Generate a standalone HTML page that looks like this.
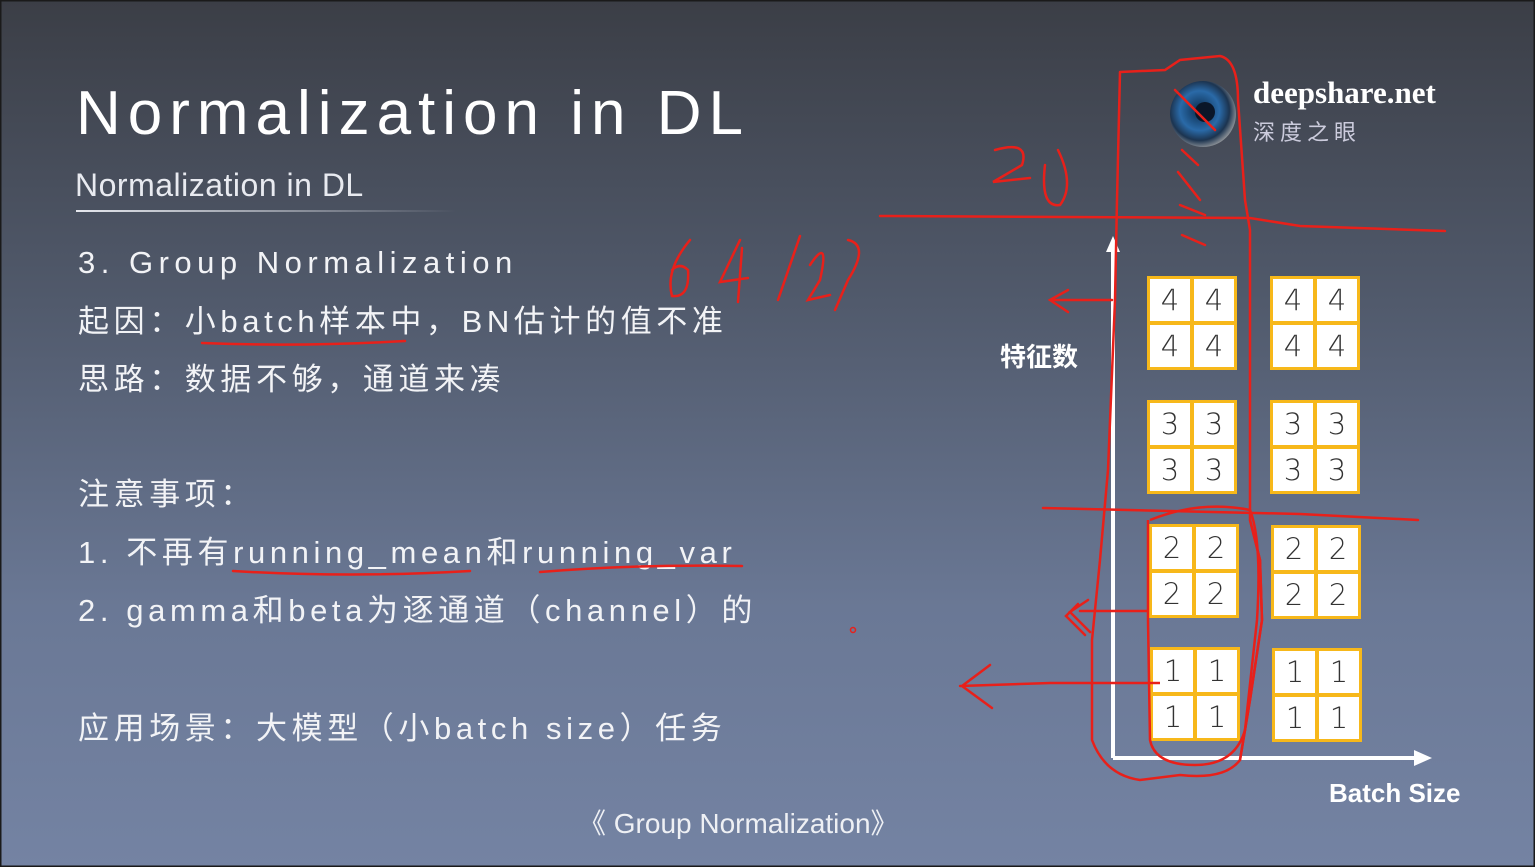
<!DOCTYPE html>
<html><head><meta charset="utf-8"><style>
html,body{margin:0;padding:0;width:1535px;height:867px;overflow:hidden}
body{background:linear-gradient(180deg,#3b3e46 0%,#515a6c 35%,#6a7895 70%,#7483a3 100%);font-family:"Liberation Sans","Noto Sans CJK SC",sans-serif}
svg{position:absolute;left:0;top:0}
.blk{position:absolute;width:90px;height:94px;background:#f7b81a;display:grid;grid-template-columns:1fr 1fr;gap:4px;padding:3px;box-sizing:border-box}
.blk div{background:#fff;display:flex;align-items:center;justify-content:center;font-size:29px;color:#333;font-family:"DejaVu Sans","Liberation Sans",sans-serif;font-weight:300}
</style></head><body>
<svg width="1535" height="867" viewBox="0 0 1535 867" xmlns="http://www.w3.org/2000/svg">
<defs><linearGradient id="ul" x1="0" x2="1"><stop offset="0" stop-color="#e6e8ee"/><stop offset="1" stop-color="#e6e8ee" stop-opacity="0"/></linearGradient>
<radialGradient id="eye" cx="0.45" cy="0.45" r="0.6"><stop offset="0" stop-color="#0b2a4a"/><stop offset="0.5" stop-color="#2a6aa8"/><stop offset="0.75" stop-color="#1c3450"/><stop offset="1" stop-color="#aaa"/></radialGradient></defs>
<rect x="0" y="0" width="1535" height="867" fill="none" stroke="#1a1a1a" stroke-width="3"/>
<g fill="#fff" font-family="Liberation Sans, Noto Sans CJK SC, sans-serif">
<text x="76" y="134" font-size="62" letter-spacing="7">Normalization in DL</text>
<text x="75" y="196" font-size="32" fill="#e8eaf0" letter-spacing="0.5">Normalization in DL</text>
<rect x="76" y="210" width="380" height="2" fill="url(#ul)"/>
<g font-size="31" letter-spacing="4.6" fill="#f2f3f6">
<text x="78" y="273" letter-spacing="5.5">3. Group Normalization</text>
<text x="78" y="332">起因：小batch样本中，BN估计的值不准</text>
<text x="78" y="390">思路：数据不够，通道来凑</text>
<text x="78" y="505">注意事项：</text>
<text x="78" y="563">1. 不再有running_mean和running_var</text>
<text x="78" y="621">2. gamma和beta为逐通道（channel）的</text>
<text x="78" y="739">应用场景：大模型（小batch size）任务</text>
</g>
<text x="578" y="833" font-size="28" fill="#eef0f4">《 Group Normalization》</text>
<text x="1000" y="366" font-size="26" font-weight="bold">特征数</text>
<text x="1329" y="802" font-size="26" font-weight="bold">Batch Size</text>
<text x="1253" y="103" font-size="31" font-weight="bold" font-family="Liberation Serif, serif">deepshare.net</text>
<text x="1253" y="140" font-size="22" fill="#ccd" letter-spacing="5">深度之眼</text>
</g>
<circle cx="1203" cy="114" r="33" fill="url(#eye)"/>
<circle cx="1205" cy="112" r="10" fill="#0a1628"/>
<g stroke="#fff" stroke-width="4" fill="#fff">
<line x1="1113" y1="758" x2="1113" y2="248"/>
<line x1="1113" y1="758" x2="1418" y2="758"/>
</g>
<polygon points="1106,252 1113,236 1120,252" fill="#fff"/>
<polygon points="1414,750 1432,758 1414,766" fill="#fff"/>
<g fill="none" stroke="#e8201a" stroke-width="2.5" stroke-linecap="round">
<path d="M880 216 L1250 218 L1300 226 L1445 231"/>
<path d="M1043 508 L1300 514 L1418 520"/>
<path d="M1120 72 L1165 70 L1180 60 L1220 56 Q1238 60 1238 100 L1245 200 L1250 230 L1250 520 L1260 560 L1262 620 L1250 700 L1240 760 Q1225 780 1180 775 L1140 780 Q1105 775 1092 740 L1092 640 L1100 560 L1108 470 L1115 300 L1117 200 L1120 72"/>
<path d="M1112 300 L1050 300 M1068 290 L1050 300 L1068 312"/>
<path d="M1150 611 L1080 611 M1088 600 L1070 612 L1090 632 M1078 604 L1066 616 L1085 635"/>
<path d="M1160 683 L1050 683 L960 686 M990 665 L962 686 L992 708"/>
<path d="M202 343 Q300 347 405 341"/>
<path d="M233 571 Q350 578 470 571 M540 572 Q640 564 742 566"/>
<path d="M995 150 Q1030 140 1022 165 L993 182 L1030 178 M1045 165 Q1040 208 1060 205 Q1075 185 1058 150"/>
<path d="M690 240 Q665 270 672 296 Q690 298 688 270 Q680 262 672 270 M740 240 L720 282 L748 278 M742 248 L738 302 M800 236 L778 300 M810 265 Q830 235 820 280 L808 300 L830 295 M848 240 Q870 245 848 280 L835 310"/>
<path d="M1175 90 L1215 130 M1182 150 L1198 165 M1178 172 L1200 200 M1180 205 L1205 215 M1182 235 L1205 245"/>
</g>
<circle cx="853" cy="630" r="2.5" fill="none" stroke="#e8201a" stroke-width="1.5"/>
</svg>
<div class="blk" style="left:1147px;top:276px"><div>4</div><div>4</div><div>4</div><div>4</div></div>
<div class="blk" style="left:1270px;top:276px"><div>4</div><div>4</div><div>4</div><div>4</div></div>
<div class="blk" style="left:1147px;top:400px"><div>3</div><div>3</div><div>3</div><div>3</div></div>
<div class="blk" style="left:1270px;top:400px"><div>3</div><div>3</div><div>3</div><div>3</div></div>
<div class="blk" style="left:1149px;top:524px"><div>2</div><div>2</div><div>2</div><div>2</div></div>
<div class="blk" style="left:1271px;top:525px"><div>2</div><div>2</div><div>2</div><div>2</div></div>
<div class="blk" style="left:1150px;top:647px"><div>1</div><div>1</div><div>1</div><div>1</div></div>
<div class="blk" style="left:1272px;top:648px"><div>1</div><div>1</div><div>1</div><div>1</div></div>
<svg width="1535" height="867" style="pointer-events:none">
<g fill="none" stroke="#e8201a" stroke-width="2.5"><path d="M1150 520 Q1200 500 1250 510 Q1262 540 1257 620 L1245 730 Q1235 765 1195 765 Q1155 765 1150 740 L1148 620 L1148 520"/><path d="M1250 520 L1260 560 L1262 620 L1250 700 L1240 760"/><path d="M1160 683 L1150 683"/></g>
</svg>
</body></html>
